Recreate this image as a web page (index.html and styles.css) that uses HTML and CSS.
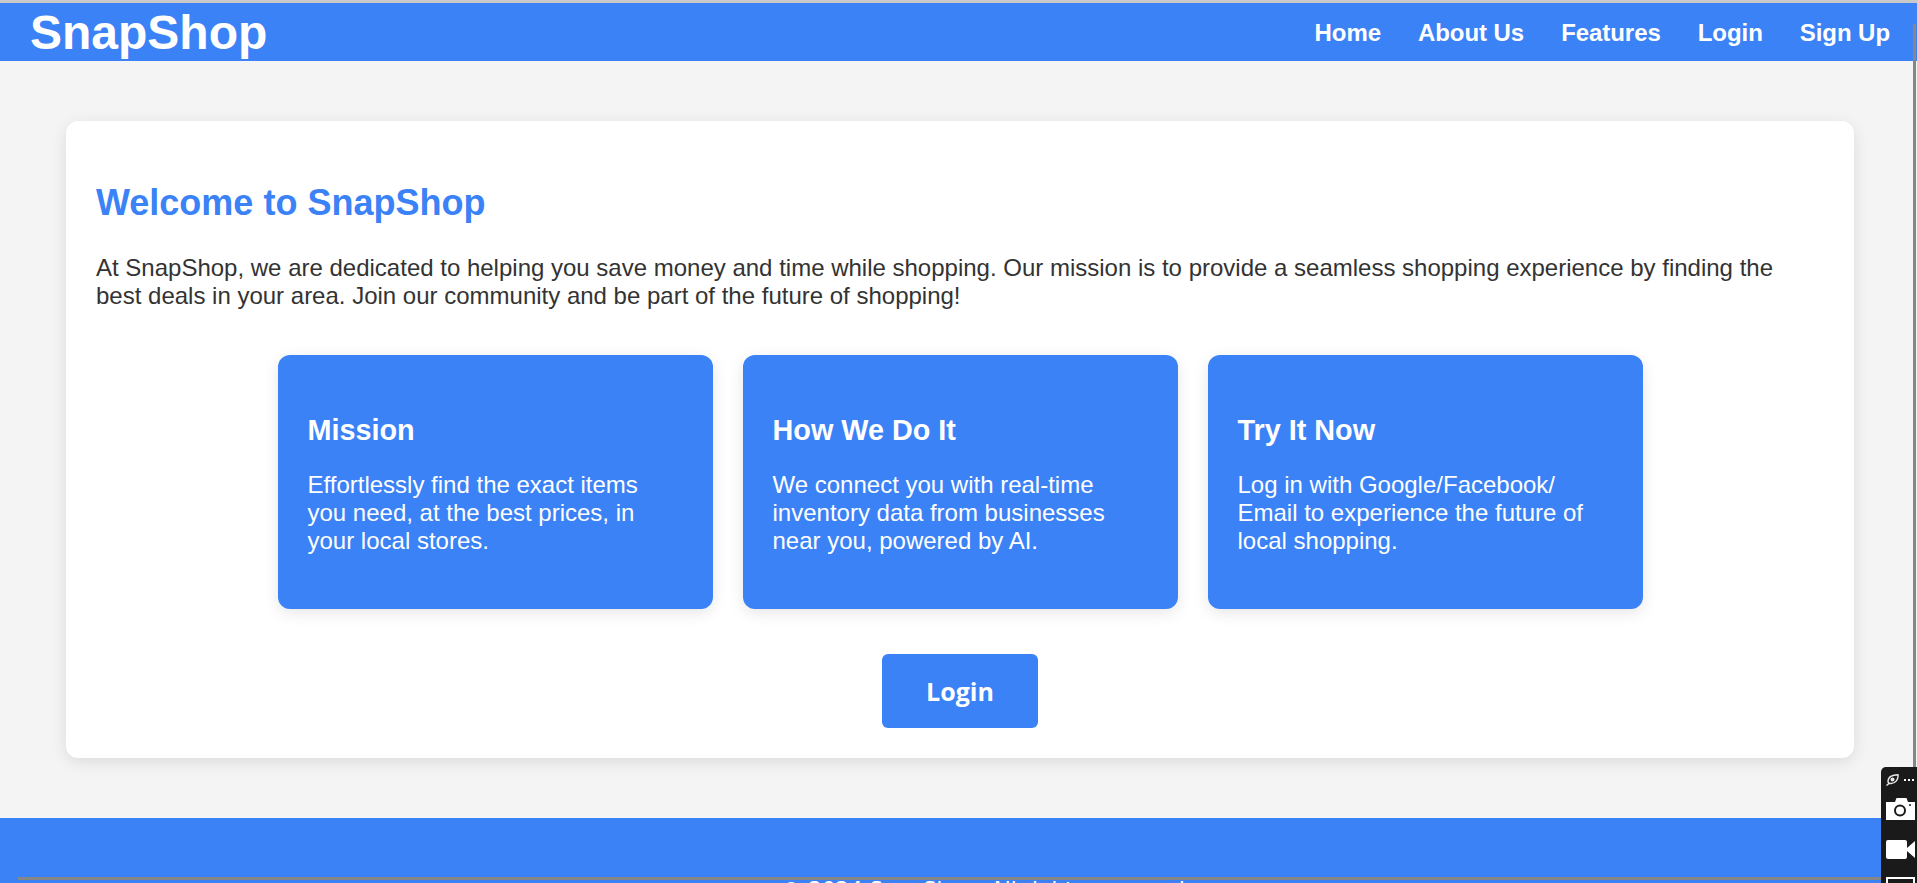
FILE: index.html
```html
<!doctype html>
<html>
<head>
  <title>SnapShop</title>
  <meta charset="utf-8"/>
  <link rel="stylesheet" href="styles.css">
</head>
<body>
  <header class="Header">
    <div class="Header__Logo">SnapShop</div>
    <nav class="Header__Nav">
      <a href="#">Home</a>
      <a href="#">About Us</a>
      <a href="#">Features</a>
      <a href="#">Login</a>
      <a href="#">Sign Up</a>
    </nav>
  </header>

  <main class="Main">
    <section class="Panel">
      <h1 class="Panel__Title">Welcome to SnapShop</h1>
      <p class="Panel__Intro">At SnapShop, we are dedicated to helping you save money and time while shopping. Our mission is to provide a seamless shopping experience by finding the best deals in your area. Join our community and be part of the future of shopping!</p>
      <div class="Cards">
        <div class="Card">
          <h2 class="Card__Title">Mission</h2>
          <p class="Card__Text">Effortlessly find the exact items you need, at the best prices, in your local stores.</p>
        </div>
        <div class="Card">
          <h2 class="Card__Title">How We Do It</h2>
          <p class="Card__Text">We connect you with real-time inventory data from businesses near you, powered by AI.</p>
        </div>
        <div class="Card">
          <h2 class="Card__Title">Try It Now</h2>
          <p class="Card__Text">Log in with Google/Facebook/ Email to experience the future of local shopping.</p>
        </div>
      </div>
      <div class="Panel__Action">
        <button class="Panel__Button">Login</button>
      </div>
    </section>
  </main>

  <footer class="Footer">&copy; 2024 SnapShop. All rights reserved.</footer>

  <div class="Scrollbar Scrollbar--v"></div>
  <div class="Scrollbar Scrollbar--h"></div>

  <div class="Tools">
    <div class="Tools__Top">
      <svg width="13" height="12" viewBox="0 0 13 12">
        <path d="M.5 11.500 L3 9.500 M2 7.500 C2 3 6 .8 12 .8 C12.500 5.500 9.500 9.500 5 9.500 C3.500 9.500 2 9 2 7.500 Z" fill="none" stroke="#e8e8e8" stroke-width="1.400"/>
        <circle cx="6.500" cy="5.500" r="2" fill="#e8e8e8"/>
      </svg>
      <span class="Tools__Dots"></span>
    </div>
    <svg class="Tools__Icon Tools__Icon--camera" width="29" height="22" viewBox="0 0 29 22">
      <path d="M0 4 H9 L10.500 0 H20.500 L22 4 H29 V22 H0 Z" fill="#fff"/>
      <circle cx="14" cy="12.500" r="5" fill="none" stroke="#1a1a1a" stroke-width="2"/>
      <circle cx="24" cy="7" r="1" fill="#1a1a1a"/>
    </svg>
    <svg class="Tools__Icon Tools__Icon--video" width="29" height="19" viewBox="0 0 29 19">
      <rect x="0" y="0" width="21" height="19" rx="2" fill="#fff"/>
      <path d="M21 8 L29 1 V18 L21 11 Z" fill="#fff"/>
    </svg>
    <div class="Tools__Screen"></div>
  </div>
</body>
</html>
```

FILE: styles.css
```css
html, body {
  height: 883px;
  margin: 0;
  overflow: hidden;
}

body {
  background-color: #f4f4f4;
  border-top: 3px solid #c9c9c9;
  box-sizing: border-box;
  color: #333;
  font-family: "Liberation Sans", Arial, sans-serif;
}

.Header {
  align-items: center;
  background-color: #3b82f6;
  color: #fff;
  display: flex;
  height: 58px;
  justify-content: space-between;
  padding: 0 27px 0 30px;
}
.Header__Logo {
  font-size: 48px;
  font-weight: bold;
}
.Header__Nav {
  display: flex;
  gap: 37px;
  padding-top: 2px;
}
.Header__Nav a {
  color: #fff;
  font-size: 24px;
  font-weight: bold;
  letter-spacing: -.06px;
  text-decoration: none;
}

.Main {
  padding: 60px 63px 60px 66px;
}

.Panel {
  background-color: #fff;
  border-radius: 12px;
  box-shadow: 0 4px 15px rgba(0, 0, 0, .1);
  box-sizing: border-box;
  height: 637px;
  padding: 30px;
}
.Panel__Title {
  color: #3b82f6;
  font-size: 36px;
  line-height: 41px;
  margin: 31px 0 31px;
}
.Panel__Intro {
  font-size: 24px;
  line-height: 28px;
  margin: 0;
}
.Panel__Action {
  display: flex;
  justify-content: center;
  margin-top: 45px;
}
.Panel__Button {
  background-color: #3b82f6;
  border: 0;
  border-radius: 6px;
  color: #fff;
  font-family: "Open Sans", sans-serif;
  font-size: 25px;
  font-weight: bold;
  height: 74px;
  width: 156px;
}

.Cards {
  display: flex;
  gap: 30px;
  justify-content: center;
  margin-top: 45px;
}
.Card {
  background-color: #3b82f6;
  border-radius: 12px;
  box-shadow: 0 4px 15px rgba(0, 0, 0, .1);
  box-sizing: border-box;
  color: #fff;
  height: 254px;
  padding: 59px 30px 0;
  width: 435px;
}
.Card__Title {
  font-size: 28.800px;
  line-height: 33px;
  margin: 0 0 24px;
}
.Card__Text {
  font-size: 24px;
  line-height: 28px;
  margin: 0;
}

.Footer {
  background-color: #3b82f6;
  color: #fff;
  font-family: "DejaVu Sans", sans-serif;
  font-size: 21.300px;
  height: 65px;
  padding: 59px 0 0 55px;
  text-align: center;
}

.Scrollbar {
  background-color: #868686;
  position: fixed;
}
.Scrollbar--v {
  height: 745px;
  right: 1px;
  top: 24px;
  width: 3px;
}
.Scrollbar--h {
  height: 3px;
  left: 18px;
  right: 0;
  top: 877px;
}

.Tools {
  background-color: #1a1a1a;
  border-top-left-radius: 5px;
  bottom: 0;
  box-sizing: border-box;
  height: 116px;
  overflow: hidden;
  padding: 7px 0 0 5px;
  position: fixed;
  right: 0;
  width: 36px;
}
.Tools__Top {
  align-items: center;
  display: flex;
  gap: 4px;
  height: 12px;
}
.Tools__Dots {
  background: radial-gradient(circle, #fff 1px, transparent 1.400px) 0 0 / 4px 4px repeat-x;
  height: 4px;
  width: 12px;
}
.Tools__Icon {
  display: block;
}
.Tools__Icon--camera {
  margin-top: 12px;
}
.Tools__Icon--video {
  margin-top: 20px;
}
.Tools__Screen {
  border: 2px solid #fff;
  border-bottom: 0;
  height: 10px;
  margin-top: 18px;
  width: 25px;
}
```
